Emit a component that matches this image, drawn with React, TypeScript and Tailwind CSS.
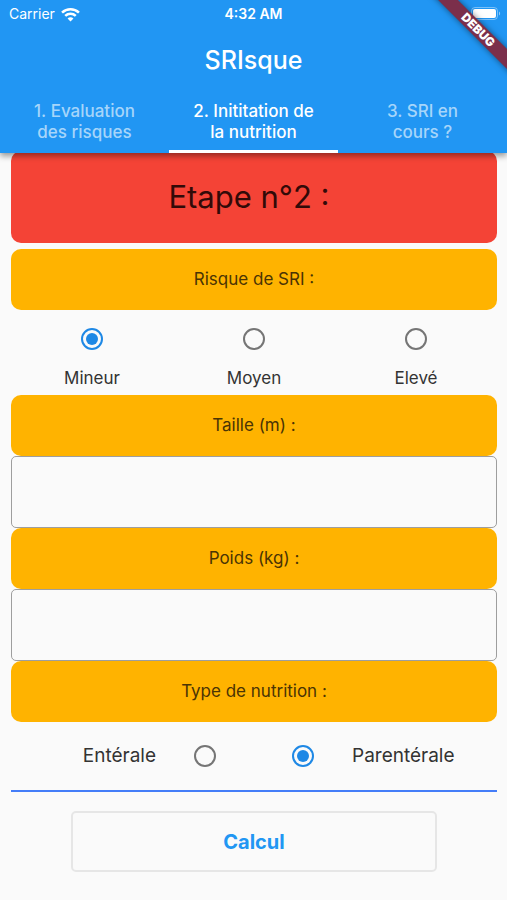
import { useState } from "react";

const tabs = [
  ["1. Evaluation", "des risques"],
  ["2. Inititation de", "la nutrition"],
  ["3. SRI en", "cours ?"],
];

const radioClass =
  "m-0 size-[22px] shrink-0 appearance-none rounded-full border-2 border-[#757575] bg-clip-content p-[3px] checked:border-[#1e88e5] checked:bg-[#1e88e5]";

const bandClass =
  "flex h-[61px] items-center justify-center rounded-[10px] bg-[#ffb300] pb-[2px] text-[17px] leading-6 text-[#4a3405]";

const fieldClass =
  "block h-[72px] w-full rounded-[5px] border border-[#9e9e9e] bg-transparent px-4 text-[20px] text-[#333333] outline-none";

function StatusBar() {
  return (
    <div className="grid h-7 grid-cols-3 items-center px-[9px] text-[14px] leading-5">
      <div className="flex items-center gap-[6px]">
        <span>Carrier</span>
        <svg width="19" height="15" viewBox="0 0 18 14" aria-hidden="true">
          <g fill="none" stroke="white" strokeWidth="2.4">
            <path d="M1 5.2C5.5 0.9 12.5 0.9 17 5.2" />
            <path d="M4 8.3C6.8 5.6 11.2 5.6 14 8.3" />
          </g>
          <path d="M9 13.6L6.2 10.8C7.8 9.3 10.2 9.3 11.8 10.8Z" fill="white" />
        </svg>
      </div>
      <span className="text-center font-semibold">4:32 AM</span>
      <svg className="-mr-[3px] justify-self-end" width="30" height="14" viewBox="0 0 30 14" aria-hidden="true">
        <rect x="0.5" y="0.5" width="26" height="12" rx="3.5" fill="none" stroke="white" strokeOpacity="0.4" />
        <rect x="2" y="2" width="23" height="9" rx="2" fill="white" />
        <path d="M28 4.5C29.5 5 29.5 8 28 8.5Z" fill="white" fillOpacity="0.5" />
      </svg>
    </div>
  );
}

export default function App() {
  const [tab, setTab] = useState(1);
  const [risk, setRisk] = useState("Mineur");
  const [feeding, setFeeding] = useState("Parentérale");

  return (
    <div className="min-h-screen bg-[#fafafa] font-['Inter','Liberation_Sans',sans-serif] text-[#333333]">
      <header className="relative z-10 bg-[#2196f3] text-white shadow-[0_3px_6px_rgba(0,0,0,0.4)]">
        <StatusBar />
        <h1 className="flex h-16 items-center justify-center text-[25px] leading-8 font-medium">SRIsque</h1>
        <div role="tablist" className="grid h-[61px] grid-cols-3">
          {tabs.map(([first, second], i) => (
            <button
              key={first}
              type="button"
              role="tab"
              aria-selected={tab === i}
              onClick={() => setTab(i)}
              className={`flex flex-col items-center justify-center border-b-3 pt-[2px] text-[17px] leading-[21px] font-medium whitespace-nowrap ${
                tab === i ? "border-white text-white" : "border-transparent text-[#a6d5fa]"
              }`}
            >
              <span>{first}</span>
              <span>{second}</span>
            </button>
          ))}
        </div>
        <div className="pointer-events-none absolute top-0 right-0 size-20 overflow-hidden">
          <div className="absolute top-[23px] -right-[31px] flex h-[14px] w-[120px] rotate-45 items-center justify-center bg-[#7b2f4b] text-[12px] leading-none font-black shadow-[0_0_6px_rgba(0,0,0,0.5)]">
            DEBUG
          </div>
        </div>
      </header>

      <main className="-mt-0.5 pr-[10px] pb-7 pl-[11px]">
        <h2 className="flex h-[92px] items-center justify-center rounded-[10px] bg-[#f44336] pr-[10px] text-[31px] leading-10 text-[#320a08]">
          Etape n°2 :
        </h2>

        <fieldset className="mt-[6px]">
          <legend className={`${bandClass} w-full`}>Risque de SRI :</legend>
          <div className="grid h-[85px] grid-cols-3 pt-[18px]">
            {["Mineur", "Moyen", "Elevé"].map((name) => (
              <label key={name} className="flex flex-col items-center gap-4 text-[17px] leading-6">
                <input
                  type="radio"
                  name="risk"
                  className={radioClass}
                  checked={risk === name}
                  onChange={() => setRisk(name)}
                />
                {name}
              </label>
            ))}
          </div>
        </fieldset>

        <label htmlFor="height" className={bandClass}>
          Taille (m) :
        </label>
        <input id="height" type="text" inputMode="decimal" className={fieldClass} />
        <label htmlFor="weight" className={bandClass}>
          Poids (kg) :
        </label>
        <input id="weight" type="text" inputMode="decimal" className={fieldClass} />

        <fieldset className="border-b-2 border-[#447df8]">
          <legend className={`${bandClass} w-full`}>Type de nutrition :</legend>
          <div className="grid h-[68px] grid-cols-2 text-[19px] leading-6">
            <label className="flex items-center justify-end gap-[38px] pr-[38px]">
              Entérale
              <input
                type="radio"
                name="feeding"
                className={radioClass}
                checked={feeding === "Entérale"}
                onChange={() => setFeeding("Entérale")}
              />
            </label>
            <label className="flex items-center gap-[38px] pl-[38px]">
              <input
                type="radio"
                name="feeding"
                className={radioClass}
                checked={feeding === "Parentérale"}
                onChange={() => setFeeding("Parentérale")}
              />
              Parentérale
            </label>
          </div>
        </fieldset>

        <div className="mt-[19px] px-[60px]">
          <button
            type="button"
            className="h-[61px] w-full rounded-[5px] border-2 border-[#e6e6e6] text-[20px] leading-6 font-bold text-[#2196f3]"
          >
            Calcul
          </button>
        </div>
      </main>
    </div>
  );
}
